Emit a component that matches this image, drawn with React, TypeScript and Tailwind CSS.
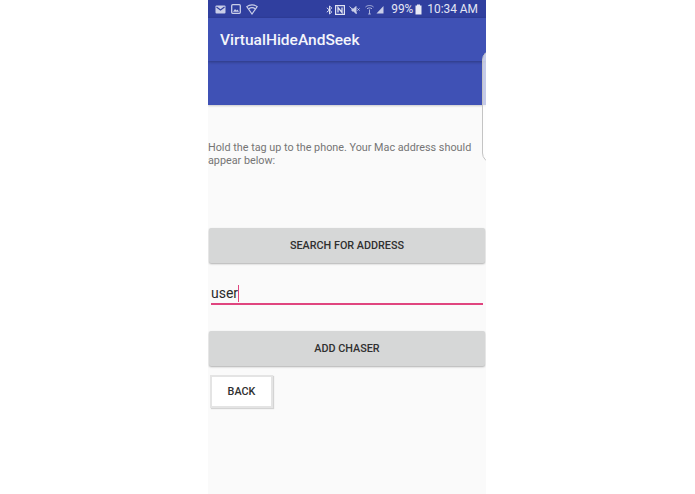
const font = "font-['Roboto',sans-serif]";

const MailIcon = () => (
  <svg width="11" height="9" viewBox="0 0 11 9" fill="none">
    <rect x="0.5" y="0.5" width="10" height="8" rx="1" fill="#c9cee8" />
    <path d="M1.5 2 L5.5 5 L9.5 2" stroke="#303f9f" strokeWidth="1.2" />
  </svg>
);

const ImageIcon = () => (
  <svg width="10" height="10" viewBox="0 0 10 10" fill="none">
    <rect x="0.7" y="0.7" width="8.6" height="8.6" rx="1" stroke="#c9cee8" strokeWidth="1.3" />
    <path d="M2 7.8 L4 5 L5.5 6.5 L6.5 5.5 L8 7.8 Z" fill="#c9cee8" />
  </svg>
);

const ShieldWifiIcon = () => (
  <svg width="12" height="11" viewBox="0 0 12 11" fill="none" stroke="#c9cee8" strokeWidth="1.2">
    <path d="M0.8 2.6 C3.8 0.2 8.2 0.2 11.2 2.6 L6 10 Z" />
    <path d="M2.8 4.8 C4.8 3.4 7.2 3.4 9.2 4.8" />
  </svg>
);

const StatusIcons = () => (
  <div className="flex items-center">
    <svg width="7" height="10" viewBox="0 0 7 10" fill="none" stroke="#dfe2f2" strokeWidth="1">
      <path d="M0.8 2.8 L5.8 7 L3.5 9 L3.5 1 L5.8 3 L0.8 7.2" />
    </svg>
    <svg className="ml-[2px]" width="10" height="10" viewBox="0 0 10 10" fill="none">
      <rect x="0.6" y="0.6" width="8.8" height="8.8" stroke="#dfe2f2" strokeWidth="1.2" />
      <path d="M3 7.5 V2.5 L7 7.5 V2.5" stroke="#dfe2f2" strokeWidth="1.3" />
    </svg>
    <svg className="ml-[4px]" width="11" height="10" viewBox="0 0 11 10" fill="none" stroke="#c9cee8" strokeWidth="1">
      <path d="M3 4 H4.5 L7 1.5 V8.5 L4.5 6 H3 Z" fill="#c9cee8" />
      <path d="M0.5 1.5 L8 8.5" />
      <path d="M8.5 3.5 L10.5 5.5 M10.5 3.5 L8.5 5.5" />
    </svg>
    <svg className="ml-[5px]" width="9" height="11" viewBox="0 0 9 11" fill="none" stroke="#aeb5dc" strokeWidth="1">
      <path d="M0.5 3 C2.7 1 6.3 1 8.5 3" />
      <path d="M2 4.8 C3.4 3.6 5.6 3.6 7 4.8" />
      <path d="M4.5 5.5 V10 M3.2 10 H5.8" />
    </svg>
    <svg className="ml-[2px]" width="8" height="9" viewBox="0 0 8 9">
      <path d="M0.5 8.5 L7.5 1 V8.5 Z" fill="#c9cee8" />
    </svg>
  </div>
);

const StatusBar = () => (
  <div className="flex h-[18px] items-center justify-between bg-[#303f9f] pl-[7px] pr-[8px]">
    <div className="flex items-center gap-[5px]">
      <MailIcon />
      <ImageIcon />
      <ShieldWifiIcon />
    </div>
    <div className="flex items-center pt-[1px] text-[11.9px] text-[#e4e6f4]">
      <StatusIcons />
      <span className="ml-[7px]">99%</span>
      <svg className="ml-[2px]" width="7" height="11" viewBox="0 0 7 11">
        <path d="M2 0.5 H5 V1.5 H6.5 V10.5 H0.5 V1.5 H2 Z" fill="#e8eaf6" />
      </svg>
      <span className="ml-[5px]">10:34 AM</span>
    </div>
  </div>
);

const GrayButton = ({ label }: { label: string }) => (
  <button className="flex h-[35px] w-full items-center justify-center rounded-[2px] bg-[#d6d7d7] pt-[1px] text-[10.8px] font-medium text-[#303030] shadow-[0_1px_2px_rgba(0,0,0,0.3)]">
    {label}
  </button>
);

export default function App() {
  return (
    <div className={`flex h-[494px] justify-center bg-white ${font}`}>
      <div className="relative ml-[-1px] flex w-[278px] flex-col overflow-hidden bg-[#fafafa]">
        <StatusBar />
        <div className="z-10 flex h-[43px] items-center bg-[#3f51b5] pl-[12px] pt-[3px] text-[15.5px] font-medium text-[#f4f5fb] shadow-[0_1px_3px_rgba(0,0,0,0.3)]">
          VirtualHideAndSeek
        </div>
        <div className="h-[44px] bg-[#3f51b5] shadow-[0_1px_2px_rgba(0,0,0,0.2)]" />

        <p className="mt-[36px] w-[270px] text-[10.8px] leading-[13px] text-[#757575]">
          Hold the tag up to the phone. Your Mac address should appear below:
        </p>

        <div className="mt-[61px] px-[1px]">
          <GrayButton label="SEARCH FOR ADDRESS" />
        </div>

        <div className="mx-[3px] mt-[20px] box-content flex h-[20px] items-center border-b-[2px] border-[#e0457f] text-[#2a2a2a]">
          <span className="text-[14px]">user</span>
          <span className="h-[17px] w-[1px] bg-[#e0457f]" />
        </div>

        <div className="mt-[26px] px-[1px]">
          <GrayButton label="ADD CHASER" />
        </div>

        <div className="mt-[9px] pl-[2px]">
          <button className="flex h-[33px] w-[63px] items-center justify-center border-[2px] border-[#e4e4e4] bg-white pt-[1px] text-[10.8px] font-medium text-[#303030] shadow-[1px_1px_1px_rgba(0,0,0,0.15)]">
            BACK
          </button>
        </div>

        {/* edge of the overlapping sheet, sticks out on the right */}
        <div className="absolute left-[274px] top-[50px] z-20 h-[113px] w-[20px] rounded-l-[10px] border border-[#c4c4c4] bg-white/70" />
      </div>
    </div>
  );
}
